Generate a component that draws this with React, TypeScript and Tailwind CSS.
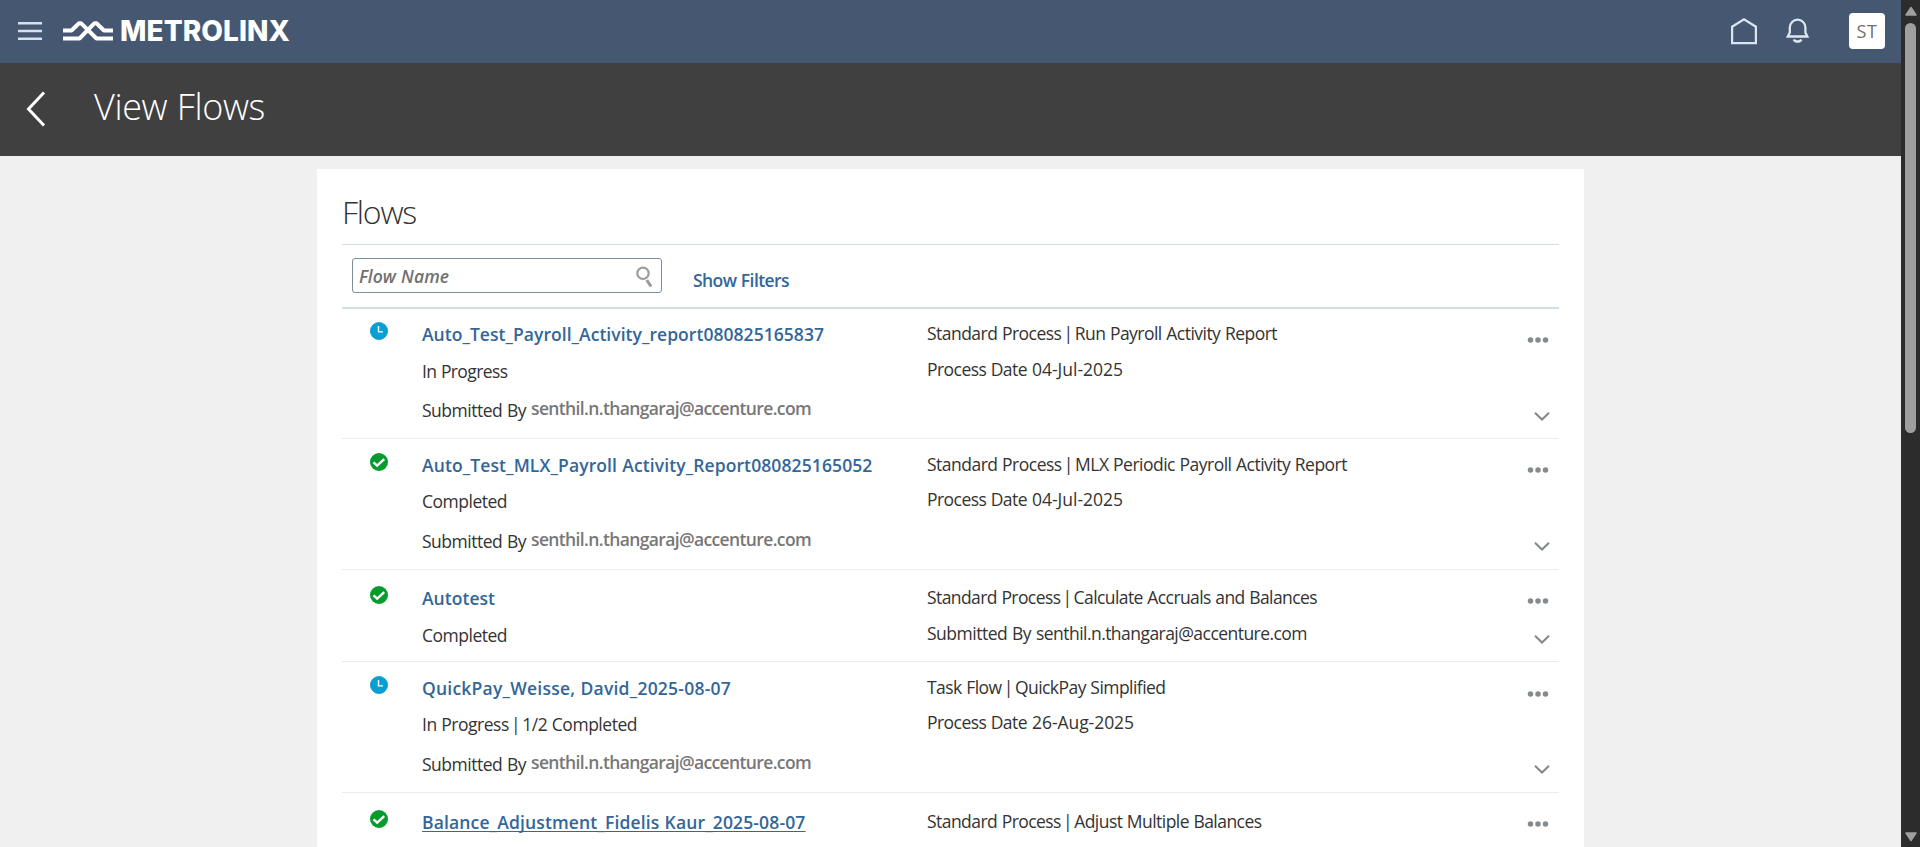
import { Fragment, useLayoutEffect, useRef, useState } from 'react';

type TextProps = { children: string; width: number; className?: string };

/* Single line of text whose tracking is adjusted to fill a given width. */
function Text({ children, width, className = '' }: TextProps) {
  const ref = useRef<HTMLSpanElement>(null);
  const [tracking, setTracking] = useState(0);
  useLayoutEffect(() => {
    const el = ref.current;
    if (!el) return;
    const natural = el.getBoundingClientRect().width;
    setTracking((width - natural) / children.length);
  }, [children, width]);
  return (
    <span ref={ref} className={`inline-block whitespace-nowrap ${className}`} style={{ letterSpacing: `${tracking}px` }}>
      {children.split('|').map((piece, i) => (
        <Fragment key={i}>
          {i > 0 && <span className="-mx-[2.400px]">|</span>}
          {piece}
        </Fragment>
      ))}
    </span>
  );
}

type Part = { text: string; width: number };
type Flow = {
  done: boolean;
  name: Part;
  status?: Part;
  owner?: boolean;
  process: Part;
  detail?: { label: Part; value: Part };
  hovered?: boolean;
  box: string;
  iconPad: string;
  titlePad: string;
  statusPad: string;
  ownerPad: string;
  processPad: string;
  detailPad: string;
  dotsPad: string;
  chevronPad: string;
};

const processDate: Part = { text: 'Process Date', width: 100 };

const flows: Flow[] = [
  {
    done: false,
    name: { text: 'Auto_Test_Payroll_Activity_report080825165837', width: 402 },
    status: { text: 'In Progress', width: 85.5 },
    owner: true,
    process: { text: 'Standard Process | Run Payroll Activity Report', width: 350 },
    detail: { label: processDate, value: { text: '04-Jul-2025', width: 91 } },
    box: 'h-[130px]',
    iconPad: 'pt-[13px]',
    titlePad: 'pt-[13px]',
    statusPad: 'pt-[13px]',
    ownerPad: 'pt-[15px]',
    processPad: 'pt-[12px]',
    detailPad: 'pt-[12px]',
    dotsPad: 'pt-[28px]',
    chevronPad: 'pt-[69px]',
  },
  {
    done: true,
    name: { text: 'Auto_Test_MLX_Payroll Activity_Report080825165052', width: 450.5 },
    status: { text: 'Completed', width: 85 },
    owner: true,
    process: { text: 'Standard Process | MLX Periodic Payroll Activity Report', width: 420 },
    detail: { label: processDate, value: { text: '04-Jul-2025', width: 91 } },
    box: 'h-[131px]',
    iconPad: 'pt-[14px]',
    titlePad: 'pt-[14px]',
    statusPad: 'pt-[12px]',
    ownerPad: 'pt-[16px]',
    processPad: 'pt-[13px]',
    detailPad: 'pt-[11px]',
    dotsPad: 'pt-[28px]',
    chevronPad: 'pt-[69px]',
  },
  {
    done: true,
    name: { text: 'Autotest', width: 73 },
    status: { text: 'Completed', width: 85 },
    process: { text: 'Standard Process | Calculate Accruals and Balances', width: 390 },
    detail: {
      label: { text: 'Submitted By', width: 104 },
      value: { text: 'senthil.n.thangaraj@accenture.com', width: 271 },
    },
    box: 'h-[92px]',
    iconPad: 'pt-[16px]',
    titlePad: 'pt-[16px]',
    statusPad: 'pt-[13px]',
    ownerPad: 'pt-0',
    processPad: 'pt-[15px]',
    detailPad: 'pt-[12px]',
    dotsPad: 'pt-[28px]',
    chevronPad: 'pt-[31px]',
  },
  {
    done: false,
    name: { text: 'QuickPay_Weisse, David_2025-08-07', width: 309 },
    status: { text: 'In Progress | 1/2 Completed', width: 215 },
    owner: true,
    process: { text: 'Task Flow | QuickPay Simplified', width: 238.5 },
    detail: { label: processDate, value: { text: '26-Aug-2025', width: 102 } },
    box: 'h-[131px]',
    iconPad: 'pt-[14px]',
    titlePad: 'pt-[14px]',
    statusPad: 'pt-[12px]',
    ownerPad: 'pt-[16px]',
    processPad: 'pt-[13px]',
    detailPad: 'pt-[11px]',
    dotsPad: 'pt-[29px]',
    chevronPad: 'pt-[68px]',
  },
  {
    done: true,
    hovered: true,
    name: { text: 'Balance_Adjustment_Fidelis Kaur_2025-08-07', width: 383.5 },
    process: { text: 'Standard Process | Adjust Multiple Balances', width: 334.5 },
    box: 'h-[92px]',
    iconPad: 'pt-[17px]',
    titlePad: 'pt-[17px]',
    statusPad: 'pt-0',
    ownerPad: 'pt-0',
    processPad: 'pt-[16px]',
    detailPad: 'pt-0',
    dotsPad: 'pt-[28px]',
    chevronPad: 'pt-0',
  },
];

function StatusIcon({ done }: { done: boolean }) {
  return (
    <svg className="h-[18px] w-[18px]" viewBox="0 0 18 18" fill="none">
      {done ? (
        <>
          <circle cx="9" cy="9" r="9" fill="#079b2e" />
          <path d="M3.5 9.300 7.200 12.600 14.200 6.100" stroke="#fff" strokeWidth="2.400" />
        </>
      ) : (
        <>
          <circle cx="9" cy="9" r="8.600" fill="#05a0d6" stroke="#0a8bbb" strokeWidth="0.700" />
          <path d="M8.500 4v5.900h4.500" stroke="#fff" strokeWidth="1.400" />
        </>
      )}
    </svg>
  );
}

function FlowRow({ flow }: { flow: Flow }) {
  return (
    <div className={`flex shrink-0 border-b border-[#ebebeb] ${flow.box}`}>
      <div className={`w-20 pl-7 ${flow.iconPad}`}>
        <StatusIcon done={flow.done} />
      </div>
      <div className={`flex w-[505px] flex-col text-[17.5px] leading-6 ${flow.titlePad}`}>
        <div className="font-semibold text-[#336699]">
          <Text
            width={flow.name.width}
            className={flow.hovered ? 'underline decoration-1 underline-offset-2 [text-decoration-skip-ink:none]' : ''}
          >
            {flow.name.text}
          </Text>
        </div>
        {flow.status && (
          <div className={flow.statusPad}>
            <Text width={flow.status.width}>{flow.status.text}</Text>
          </div>
        )}
        {flow.owner && (
          <div className={`flex ${flow.ownerPad}`}>
            <Text width={104}>Submitted By</Text>
            <Text width={280} className="-mt-0.5 ml-[5px] font-semibold text-[#777]">
              senthil.n.thangaraj@accenture.com
            </Text>
          </div>
        )}
      </div>
      <div className={`flex flex-1 flex-col text-[17.5px] leading-6 ${flow.processPad}`}>
        <div>
          <Text width={flow.process.width}>{flow.process.text}</Text>
        </div>
        {flow.detail && (
          <div className={`flex gap-[5px] ${flow.detailPad}`}>
            <Text width={flow.detail.label.width}>{flow.detail.label.text}</Text>
            <Text width={flow.detail.value.width}>{flow.detail.value.text}</Text>
          </div>
        )}
      </div>
      <div className={`flex w-[32px] flex-col ${flow.dotsPad}`}>
        <svg className="h-1.5 w-[22px]" viewBox="0 0 22 6" fill="#858a8e">
          <circle cx="3.5" cy="3" r="2.75" />
          <circle cx="11" cy="3" r="2.75" />
          <circle cx="18.5" cy="3" r="2.75" />
        </svg>
        {flow.detail && (
          <div className={`pl-[7px] ${flow.chevronPad}`}>
            <svg className="h-[9px] w-4" viewBox="0 0 16 9" fill="none" stroke="#83878a" strokeWidth="2">
              <path d="M1 .8 8 7.5 15 .8" />
            </svg>
          </div>
        )}
      </div>
    </div>
  );
}

export default function App() {
  return (
    <div className="flex h-[847px] w-[1920px] overflow-hidden bg-[#f0f0f0] font-['Open_Sans','Noto_Sans',sans-serif] text-[#333] [word-spacing:0.5px]">
      <div className="flex w-[1901px] flex-col">
        <header className="flex h-[63px] shrink-0 items-center bg-[#465772] pr-4 pb-px pl-[18px]">
          <svg className="h-[18px] w-6" viewBox="0 0 24 18" fill="#d5dfee">
            <path d="M0 0h24v2.5H0zM0 7.7h24v2.5H0zM0 15.4h24v2.5H0z" />
          </svg>
          <svg
            className="ml-5 h-[22px] w-[52px]"
            viewBox="0 0 52 22"
            fill="none"
            stroke="#fff"
            strokeWidth="4"
            strokeLinejoin="bevel"
          >
            <path d="M1 10.500h8.500L17 3.200h2L34.500 18.500H51" />
            <path d="M1 18.500h16.500L32.500 3.200h2l7.500 7.300H51" />
          </svg>
          <div className="ml-[6px] font-['Inter','Open_Sans',sans-serif] text-[28px] leading-7 font-extrabold text-white">
            <Text width={170}>METROLINX</Text>
          </div>
          <div className="ml-auto flex items-center">
            <svg className="h-7 w-7" viewBox="0 0 28 28" fill="none" stroke="#dce5f2" strokeWidth="2.2">
              <path d="M2.1 9.700 14 2.200 25.900 9.700V26.200H2.100z" />
            </svg>
            <svg className="ml-7 h-[26px] w-[23px]" viewBox="0 0 23 26" fill="none" stroke="#dce5f2" strokeWidth="2.3">
              <path d="M1.800 18.500h19.600l-2-4V9.500a7.800 7.800 0 0 0-15.600 0v5z" />
              <path d="M7.800 21.500a4 3 0 0 0 7.600 0" strokeWidth="2.500" />
            </svg>
            <div className="ml-10 flex size-9 items-center justify-center rounded-[4px] bg-white text-[18px] text-[#707070]">
              <Text width={21}>ST</Text>
            </div>
          </div>
        </header>
        <div className="flex h-[93px] shrink-0 items-center bg-[#404040] pl-[26px]">
          <svg className="mb-0.5 h-9 w-5" viewBox="0 0 20 36" fill="none" stroke="#fff" strokeWidth="3">
            <path d="M18 1.500 2.500 18 18 34.500" />
          </svg>
          <h1 className="mb-[5px] ml-[48px] text-[36px] leading-[48px] font-light text-white">
            <Text width={171}>View Flows</Text>
          </h1>
        </div>
        <main className="mt-[13px] ml-[317px] flex min-h-0 w-[1267px] flex-1 flex-col overflow-hidden bg-white px-[25px]">
          <h2 className="h-[76px] shrink-0 border-b border-[#d3dce4] pt-[22px] text-[32px] leading-[42px] font-light">
            <Text width={74}>Flows</Text>
          </h2>
          <div className="flex h-[64px] shrink-0 border-b-2 border-[#d3dde6] pt-[13px] pl-2.5">
            <div className="flex h-[35px] w-[310px] items-center justify-between rounded-[3px] border border-[#7c8f9c] pt-0.5 pr-2 pl-1.5 text-[17.5px] font-semibold text-[#707070] italic">
              <Text width={90}>Flow Name</Text>
              <svg className="h-[22px] w-[18px]" viewBox="0 0 18 22" fill="none" stroke="#999d9f">
                <circle cx="8" cy="7.300" r="5.700" strokeWidth="2.200" />
                <path d="m11.800 14 4.200 6.500" strokeWidth="3.200" />
              </svg>
            </div>
            <div className="ml-[31px] pt-[10px] text-[17.5px] leading-6 font-semibold text-[#336699]">
              <Text width={96}>Show Filters</Text>
            </div>
          </div>
          {flows.map((flow) => (
            <FlowRow key={flow.name.text} flow={flow} />
          ))}
        </main>
      </div>
      <div className="flex w-[19px] flex-col items-center bg-[#2c2c2c] pt-1.5 pb-[5px]">
        <svg className="h-2.5 w-3" viewBox="0 0 12 10" fill="#9f9f9f" stroke="#9f9f9f" strokeLinejoin="round" strokeWidth="1.500">
          <path d="M1 9 6 1.500 11 9z" />
        </svg>
        <div className="mt-[7px] h-[410px] w-[11px] rounded-full bg-[#9f9f9f]" />
        <svg className="mt-auto h-2.5 w-3" viewBox="0 0 12 10" fill="#9f9f9f" stroke="#9f9f9f" strokeLinejoin="round" strokeWidth="1.500">
          <path d="M1 1 6 8.500 11 1z" />
        </svg>
      </div>
    </div>
  );
}
